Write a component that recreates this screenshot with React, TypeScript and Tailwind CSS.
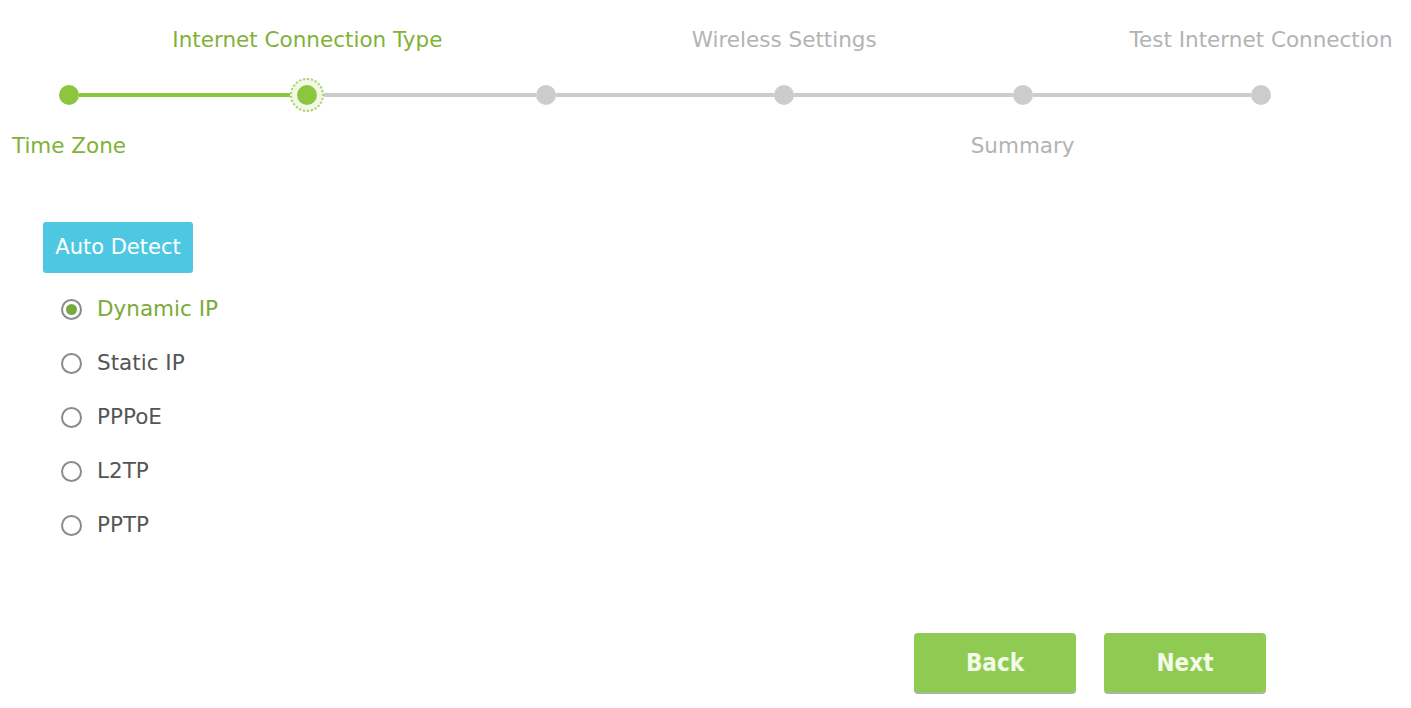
import { useState } from 'react'

const steps = [
  { label: 'Time Zone', pos: 'below' },
  { label: 'Internet Connection Type', pos: 'above' },
  { label: '', pos: 'below' },
  { label: 'Wireless Settings', pos: 'above' },
  { label: 'Summary', pos: 'below' },
  { label: 'Test Internet Connection', pos: 'above' },
]

const types = ['Dynamic IP', 'Static IP', 'PPPoE', 'L2TP', 'PPTP']

const current = 1

function Dot({ index }: { index: number }) {
  const step = steps[index]
  const done = index <= current
  return (
    <div className="relative h-[20px] w-[20px] shrink-0">
      {index === current && (
        <div className="absolute -inset-[7px] rounded-full border-2 border-dotted border-[#a5d36c] bg-[#f1f8e6]" />
      )}
      <div className={`relative h-[20px] w-[20px] rounded-full ${done ? 'bg-[#8cc63f]' : 'bg-[#cccccc]'}`} />
      {step.label && (
        <span
          className={`absolute left-1/2 -translate-x-1/2 whitespace-nowrap text-[21.5px] leading-[33px] ${
            step.pos === 'above' ? '-top-[62px]' : 'top-[44px]'
          } ${done ? 'text-[#7fb238]' : 'text-[#b3b3b3]'}`}
        >
          {step.label}
        </span>
      )}
    </div>
  )
}

export default function App() {
  const [selected, setSelected] = useState('Dynamic IP')

  return (
    <div className="h-[708px] w-[1411px] overflow-hidden bg-white font-['DejaVu_Sans',sans-serif]">
      {/* stepper */}
      <div className="ml-[59px] mt-[85px] flex w-[1212px] items-center">
        {steps.map((_, i) => (
          <div key={i} className={`flex items-center ${i < steps.length - 1 ? 'flex-1' : ''}`}>
            <Dot index={i} />
            {i < steps.length - 1 && (
              <div className={`h-[4px] flex-1 ${i < current ? 'bg-[#8cc63f]' : 'bg-[#cccccc]'}`} />
            )}
          </div>
        ))}
      </div>

      {/* connection type */}
      <div className="ml-[43px] mt-[117px] flex flex-col">
        <button className="h-[51px] w-[150px] rounded-[3px] bg-[#4ec8e2] text-[21px] text-white">
          Auto Detect
        </button>
        <div className="ml-[18px] mt-[9px] flex flex-col">
          {types.map(t => {
            const on = t === selected
            return (
              <label
                key={t}
                onClick={() => setSelected(t)}
                className="flex h-[54px] cursor-pointer items-center gap-[15px]"
              >
                <span className="flex h-[21px] w-[21px] items-center justify-center rounded-full border-2 border-[#8a8a8a] bg-white">
                  {on && <span className="h-[11px] w-[11px] rounded-full bg-[#78a93e]" />}
                </span>
                <span className={`text-[21.5px] ${on ? 'text-[#7aaa38]' : 'text-[#555555]'}`}>{t}</span>
              </label>
            )
          })}
        </div>
      </div>

      {/* actions */}
      <div className="mr-[145px] mt-[81px] flex justify-end gap-[28px]">
        <button className="h-[59px] w-[162px] rounded-[4px] bg-[#8fcb53] font-['DejaVu_Sans_Condensed',sans-serif] text-[24px] font-bold text-[#f4fbe8] shadow-[0_2px_0_#a8b89a]">
          Back
        </button>
        <button className="h-[59px] w-[162px] rounded-[4px] bg-[#8fcb53] font-['DejaVu_Sans_Condensed',sans-serif] text-[24px] font-bold text-[#f4fbe8] shadow-[0_2px_0_#a8b89a]">
          Next
        </button>
      </div>
    </div>
  )
}
